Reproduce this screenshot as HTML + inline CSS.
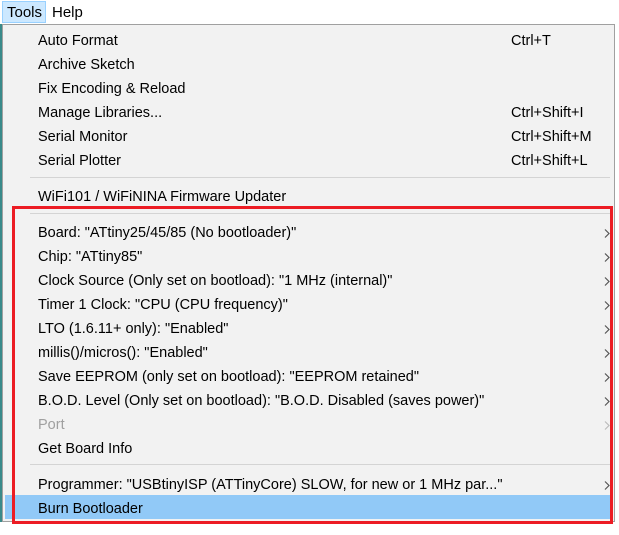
<!DOCTYPE html><html><head><style>
body{margin:0;width:619px;height:535px;background:#fff;font-family:"Segoe UI","Liberation Sans",sans-serif;font-size:14.5px;color:#000;position:relative;overflow:hidden}
.mb{position:absolute;top:0;left:0;width:619px;height:24px;background:#fff}
.t{position:absolute;left:2px;top:1px;width:44px;height:22px;background:#cce8ff;border:1px solid #99d1ff;box-sizing:border-box}
.mb span{position:absolute;top:4px;font-size:15px}
.menu{position:absolute;left:2px;top:24px;width:613px;height:498px;background:#f2f2f2;border:1px solid #a0a0a0;box-sizing:border-box}
.lstrip{position:absolute;left:0;top:24px;width:2px;height:498px;background:#3a8a8a}
.it{position:absolute;left:38px;height:24px;line-height:24px;white-space:nowrap;margin-top:1px}
.sc{position:absolute;left:511px;height:24px;line-height:24px;margin-top:1px}
.ar{position:absolute;left:604px;margin-top:9px}
.sep{position:absolute;left:30px;width:580px;height:1px;background:#d4d4d4}
.hl{position:absolute;left:5px;top:495px;width:607px;height:24px;background:#91c9f7}
.red{position:absolute;left:12px;top:206px;width:601px;height:318px;border:3px solid #ec1c24;box-sizing:border-box}
.dis{color:#a0a0a0}
</style></head><body>
<div class="mb"><div class="t"></div><span style="left:7px">Tools</span><span style="left:52px">Help</span></div>
<div class="lstrip"></div>
<div class="menu"></div>
<div class="hl"></div>
<div class="it" style="top:28px">Auto Format</div><div class="sc" style="top:28px">Ctrl+T</div>
<div class="it" style="top:52px">Archive Sketch</div>
<div class="it" style="top:76px">Fix Encoding &amp; Reload</div>
<div class="it" style="top:100px">Manage Libraries...</div><div class="sc" style="top:100px">Ctrl+Shift+I</div>
<div class="it" style="top:124px">Serial Monitor</div><div class="sc" style="top:124px">Ctrl+Shift+M</div>
<div class="it" style="top:148px">Serial Plotter</div><div class="sc" style="top:148px">Ctrl+Shift+L</div>
<div class="sep" style="top:177px"></div>
<div class="it" style="top:184px">WiFi101 / WiFiNINA Firmware Updater</div>
<div class="sep" style="top:213px"></div>
<div class="it" style="top:220px">Board: "ATtiny25/45/85 (No bootloader)"</div><svg class="ar" style="top:220px" width="6" height="9" viewBox="0 0 6 9"><path d="M1 .5 L5 4.5 L1 8.5" fill="none" stroke="#555" stroke-width="1.2"/></svg>
<div class="it" style="top:244px">Chip: "ATtiny85"</div><svg class="ar" style="top:244px" width="6" height="9" viewBox="0 0 6 9"><path d="M1 .5 L5 4.5 L1 8.5" fill="none" stroke="#555" stroke-width="1.2"/></svg>
<div class="it" style="top:268px">Clock Source (Only set on bootload): "1 MHz (internal)"</div><svg class="ar" style="top:268px" width="6" height="9" viewBox="0 0 6 9"><path d="M1 .5 L5 4.5 L1 8.5" fill="none" stroke="#555" stroke-width="1.2"/></svg>
<div class="it" style="top:292px">Timer 1 Clock: "CPU (CPU frequency)"</div><svg class="ar" style="top:292px" width="6" height="9" viewBox="0 0 6 9"><path d="M1 .5 L5 4.5 L1 8.5" fill="none" stroke="#555" stroke-width="1.2"/></svg>
<div class="it" style="top:316px">LTO (1.6.11+ only): "Enabled"</div><svg class="ar" style="top:316px" width="6" height="9" viewBox="0 0 6 9"><path d="M1 .5 L5 4.5 L1 8.5" fill="none" stroke="#555" stroke-width="1.2"/></svg>
<div class="it" style="top:340px">millis()/micros(): "Enabled"</div><svg class="ar" style="top:340px" width="6" height="9" viewBox="0 0 6 9"><path d="M1 .5 L5 4.5 L1 8.5" fill="none" stroke="#555" stroke-width="1.2"/></svg>
<div class="it" style="top:364px">Save EEPROM (only set on bootload): "EEPROM retained"</div><svg class="ar" style="top:364px" width="6" height="9" viewBox="0 0 6 9"><path d="M1 .5 L5 4.5 L1 8.5" fill="none" stroke="#555" stroke-width="1.2"/></svg>
<div class="it" style="top:388px">B.O.D. Level (Only set on bootload): "B.O.D. Disabled (saves power)"</div><svg class="ar" style="top:388px" width="6" height="9" viewBox="0 0 6 9"><path d="M1 .5 L5 4.5 L1 8.5" fill="none" stroke="#555" stroke-width="1.2"/></svg>
<div class="it dis" style="top:412px">Port</div><svg class="ar" style="top:412px" width="6" height="9" viewBox="0 0 6 9"><path d="M1 .5 L5 4.5 L1 8.5" fill="none" stroke="#bbb" stroke-width="1.2"/></svg>
<div class="it" style="top:436px">Get Board Info</div>
<div class="sep" style="top:464px"></div>
<div class="it" style="top:472px">Programmer: "USBtinyISP (ATTinyCore) SLOW, for new or 1 MHz par..."</div><svg class="ar" style="top:472px" width="6" height="9" viewBox="0 0 6 9"><path d="M1 .5 L5 4.5 L1 8.5" fill="none" stroke="#555" stroke-width="1.2"/></svg>
<div class="it" style="top:496px">Burn Bootloader</div>
<div class="red"></div>
</body></html>
